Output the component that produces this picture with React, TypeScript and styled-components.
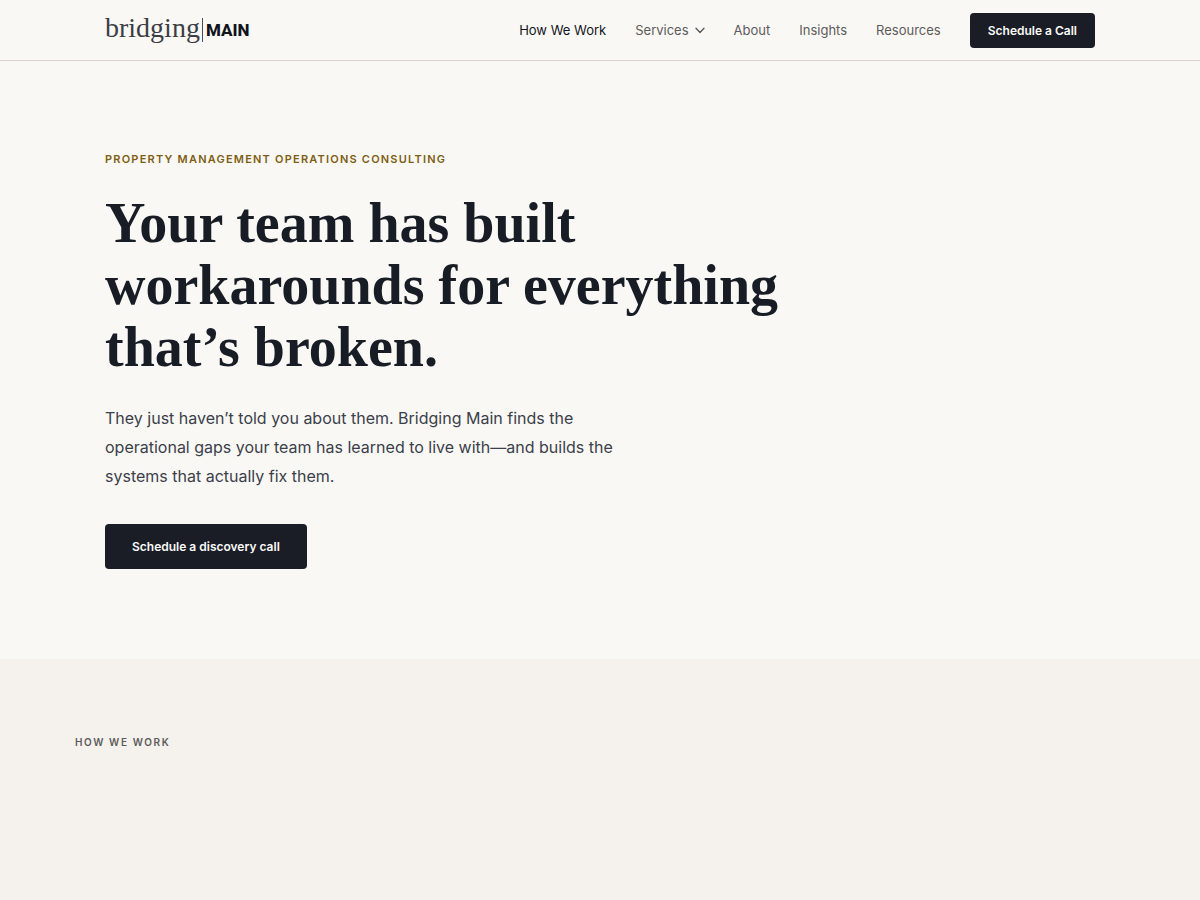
import React from "react";
import styled, { createGlobalStyle } from "styled-components";

const GlobalStyle = createGlobalStyle`
  *, *::before, *::after { box-sizing: border-box; }
  body {
    margin: 0;
    background: #faf8f5;
    color: #181c25;
    font-family: Inter, "Liberation Sans", sans-serif;
  }
`;

const Page = styled.div`
  min-height: 100vh;
  display: flex;
  flex-direction: column;
`;

const Header = styled.header`
  border-bottom: 1px solid #dcd3ce;
`;

const Container = styled.div`
  width: 100%;
  max-width: 1050px;
  margin: 0 auto;
  padding: 0 30px;
`;

const HeaderRow = styled(Container)`
  min-height: 60px;
  display: flex;
  align-items: center;
  justify-content: space-between;
`;

const Logo = styled.a`
  display: flex;
  align-items: center;
  color: #181c25;
  text-decoration: none;
  line-height: 24px;
`;

const LogoLight = styled.span`
  padding-right: 2px;
  padding-bottom: 4px;
  border-right: 1px solid #4a4c52;
  color: #3c3e44;
  font-family: "Liberation Serif", serif;
  font-size: 28px;
  line-height: 20px;
`;

const LogoBold = styled.span`
  padding-left: 3px;
  color: #11141c;
  font-family: Roboto, sans-serif;
  font-size: 17px;
  font-weight: 800;
`;

const Nav = styled.nav`
  display: flex;
  align-items: center;
  gap: 29px;
`;

const NavLink = styled.a<{ $active?: boolean }>`
  display: flex;
  align-items: center;
  gap: 6px;
  color: ${(p) => (p.$active ? "#11141c" : "#5c5b5b")};
  font-size: 13px;
  font-weight: 400;
  line-height: 20px;
  text-decoration: none;
  white-space: nowrap;
`;

const Button = styled.button<{ $large?: boolean }>`
  height: ${(p) => (p.$large ? 45 : 35)}px;
  padding: 0 ${(p) => (p.$large ? 27 : 18)}px;
  border: 0;
  border-radius: 4px;
  background: #1a1d26;
  color: #fbfaf8;
  font-family: inherit;
  font-size: 12px;
  font-weight: 600;
  white-space: nowrap;
  cursor: pointer;
`;

const Hero = styled(Container).attrs({ as: "section" })`
  padding-top: 90px;
  padding-bottom: 90px;
`;

const Eyebrow = styled.p`
  margin: 0 0 24px;
  color: #7d5e14;
  font-size: 11px;
  font-weight: 600;
  letter-spacing: 0.11em;
  line-height: 17px;
  text-transform: uppercase;
`;

const Title = styled.h1`
  max-width: 750px;
  margin: 0 0 26px;
  font-family: "Liberation Serif", serif;
  font-size: 56px;
  font-weight: 700;
  line-height: 62px;
`;

const Lead = styled.p`
  max-width: 530px;
  margin: 0 0 33px;
  color: #3b3f4a;
  font-size: 16px;
  line-height: 29px;
`;

const Work = styled.section`
  flex: 1;
  padding: 75px 30px;
  background: #f5f1ec;
`;

const WorkInner = styled.div`
  max-width: 1050px;
  margin: 0 auto;
`;

const SectionLabel = styled.h2`
  margin: 0;
  color: #5c5b5b;
  font-size: 10px;
  font-weight: 600;
  letter-spacing: 0.16em;
  line-height: 16px;
  text-transform: uppercase;
`;

const Chevron = () => (
  <svg width="10" height="7" viewBox="0 0 10 7" fill="none" aria-hidden="true">
    <path d="M1 1.2 5 5.4 9 1.2" stroke="currentColor" strokeWidth="1.4" strokeLinecap="round" strokeLinejoin="round" />
  </svg>
);

export default function App() {
  return (
    <Page>
      <GlobalStyle />
      <Header>
        <HeaderRow>
          <Logo href="#home">
            <LogoLight>bridging</LogoLight>
            <LogoBold>MAIN</LogoBold>
          </Logo>
          <Nav>
            <NavLink href="#how" $active>How We Work</NavLink>
            <NavLink href="#services">
              Services
              <Chevron />
            </NavLink>
            <NavLink href="#about">About</NavLink>
            <NavLink href="#insights">Insights</NavLink>
            <NavLink href="#resources">Resources</NavLink>
            <Button type="button">Schedule a Call</Button>
          </Nav>
        </HeaderRow>
      </Header>
      <Hero>
        <Eyebrow>Property Management Operations Consulting</Eyebrow>
        <Title>Your team has built workarounds for everything that’s broken.</Title>
        <Lead>
          They just haven’t told you about them. Bridging Main finds the operational gaps your team
          has learned to live with—and builds the systems that actually fix them.
        </Lead>
        <Button type="button" $large>Schedule a discovery call</Button>
      </Hero>
      <Work id="how">
        <WorkInner>
          <SectionLabel>How We Work</SectionLabel>
        </WorkInner>
      </Work>
    </Page>
  );
}
